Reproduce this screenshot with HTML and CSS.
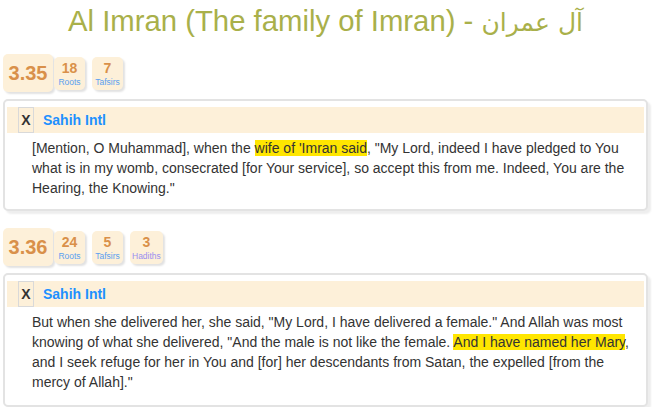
FILE: index.html
```html
<!DOCTYPE html>
<html>
<head>
<meta charset="utf-8">
<link rel="stylesheet" href="styles.css">
</head>
<body>
<h1 class="title">Al Imran (The family of Imran) - <span class="ar">آل عمران</span></h1>

<section class="verse">
  <div class="badges">
    <div class="badge badge-main">3.35</div>
    <div class="badge"><span class="num">18</span><span class="lbl">Roots</span></div>
    <div class="badge"><span class="num">7</span><span class="lbl">Tafsirs</span></div>
  </div>
  <div class="card">
    <div class="card-head"><span class="close">X</span><span class="src">Sahih Intl</span></div>
    <p class="text">[Mention, O Muhammad], when the <mark>wife of 'Imran said</mark>, "My Lord, indeed I have pledged to You what is in my womb, consecrated [for Your service], so accept this from me. Indeed, You are the Hearing, the Knowing."</p>
  </div>
</section>

<section class="verse">
  <div class="badges">
    <div class="badge badge-main">3.36</div>
    <div class="badge"><span class="num">24</span><span class="lbl">Roots</span></div>
    <div class="badge"><span class="num">5</span><span class="lbl">Tafsirs</span></div>
    <div class="badge"><span class="num">3</span><span class="lbl lbl-purple">Hadiths</span></div>
  </div>
  <div class="card">
    <div class="card-head"><span class="close">X</span><span class="src">Sahih Intl</span></div>
    <p class="text">But when she delivered her, she said, "My Lord, I have delivered a female." And Allah was most knowing of what she delivered, "And the male is not like the female. <mark>And I have named her Mary</mark>, and I seek refuge for her in You and [for] her descendants from Satan, the expelled [from the mercy of Allah]."</p>
  </div>
</section>
</body>
</html>
```
FILE: styles.css
```css
html, body {
  margin: 0;
  padding: 0;
  background: #fff;
}
body {
  font-family: "Liberation Sans", Arial, sans-serif;
  color: #333;
  padding: 0 6px 0 3px;
}
.title {
  margin: 4px 0 0 0;
  font-size: 29.3px;
  font-weight: normal;
  text-align: center;
  color: #a9b04a;
  line-height: 34px;
}
.ar {
  font-family: "DejaVu Sans", sans-serif;
  font-size: 25px;
}
.verse {
  margin-top: 14px;
}
.verse + .verse {
  margin-top: 17px;
}
.badges {
  display: flex;
  align-items: flex-start;
  padding-left: 0;
}
.badge {
  box-sizing: border-box;
  background: #fdf0d9;
  border-radius: 5px;
  box-shadow: 2px 2px 2px #e2e2e2;
  display: flex;
  flex-direction: column;
  align-items: center;
  height: 33px;
  padding: 3px 2px 0;
  min-width: 31px;
  margin-top: 3px;
  margin-left: 7px;
}
.badge-main + .badge {
  margin-left: 1px;
}
.badge-main {
  height: 38px;
  min-width: 50px;
  font-size: 20px;
  font-weight: bold;
  color: #d9904a;
  padding: 9px 5px;
  margin: 0;
  line-height: 20px;
}
.num {
  font-size: 14px;
  font-weight: bold;
  color: #d9904a;
  line-height: 16px;
}
.lbl {
  font-size: 8.5px;
  color: #5a9ff0;
  line-height: 12px;
}
.lbl-purple {
  color: #9a8ff0;
}
.card {
  margin-top: 7px;
  border: 2px solid #e3e3e3;
  border-radius: 5px;
  box-shadow: 3px 3px 2px #eeeeee;
  padding: 6px 2px 11px 2px;
  background: #fff;
}
.verse + .verse .card {
  margin-top: 7px;
  padding-bottom: 13px;
}
.card-head {
  background: #fdf0d9;
  height: 26px;
  display: flex;
  align-items: center;
  padding-left: 11px;
}
.close {
  box-sizing: border-box;
  width: 16px;
  height: 26px;
  border: 1px solid #d9d9d9;
  display: flex;
  align-items: center;
  justify-content: center;
  font-weight: bold;
  font-size: 14px;
  color: #333;
}
.src {
  margin-left: 9px;
  font-size: 14px;
  font-weight: bold;
  color: #1e90ff;
}
.text {
  margin: 5px 10px 0 25px;
  font-size: 14px;
  line-height: 20px;
  color: #333;
}
mark {
  background: #ffe600;
  color: #333;
}
```
